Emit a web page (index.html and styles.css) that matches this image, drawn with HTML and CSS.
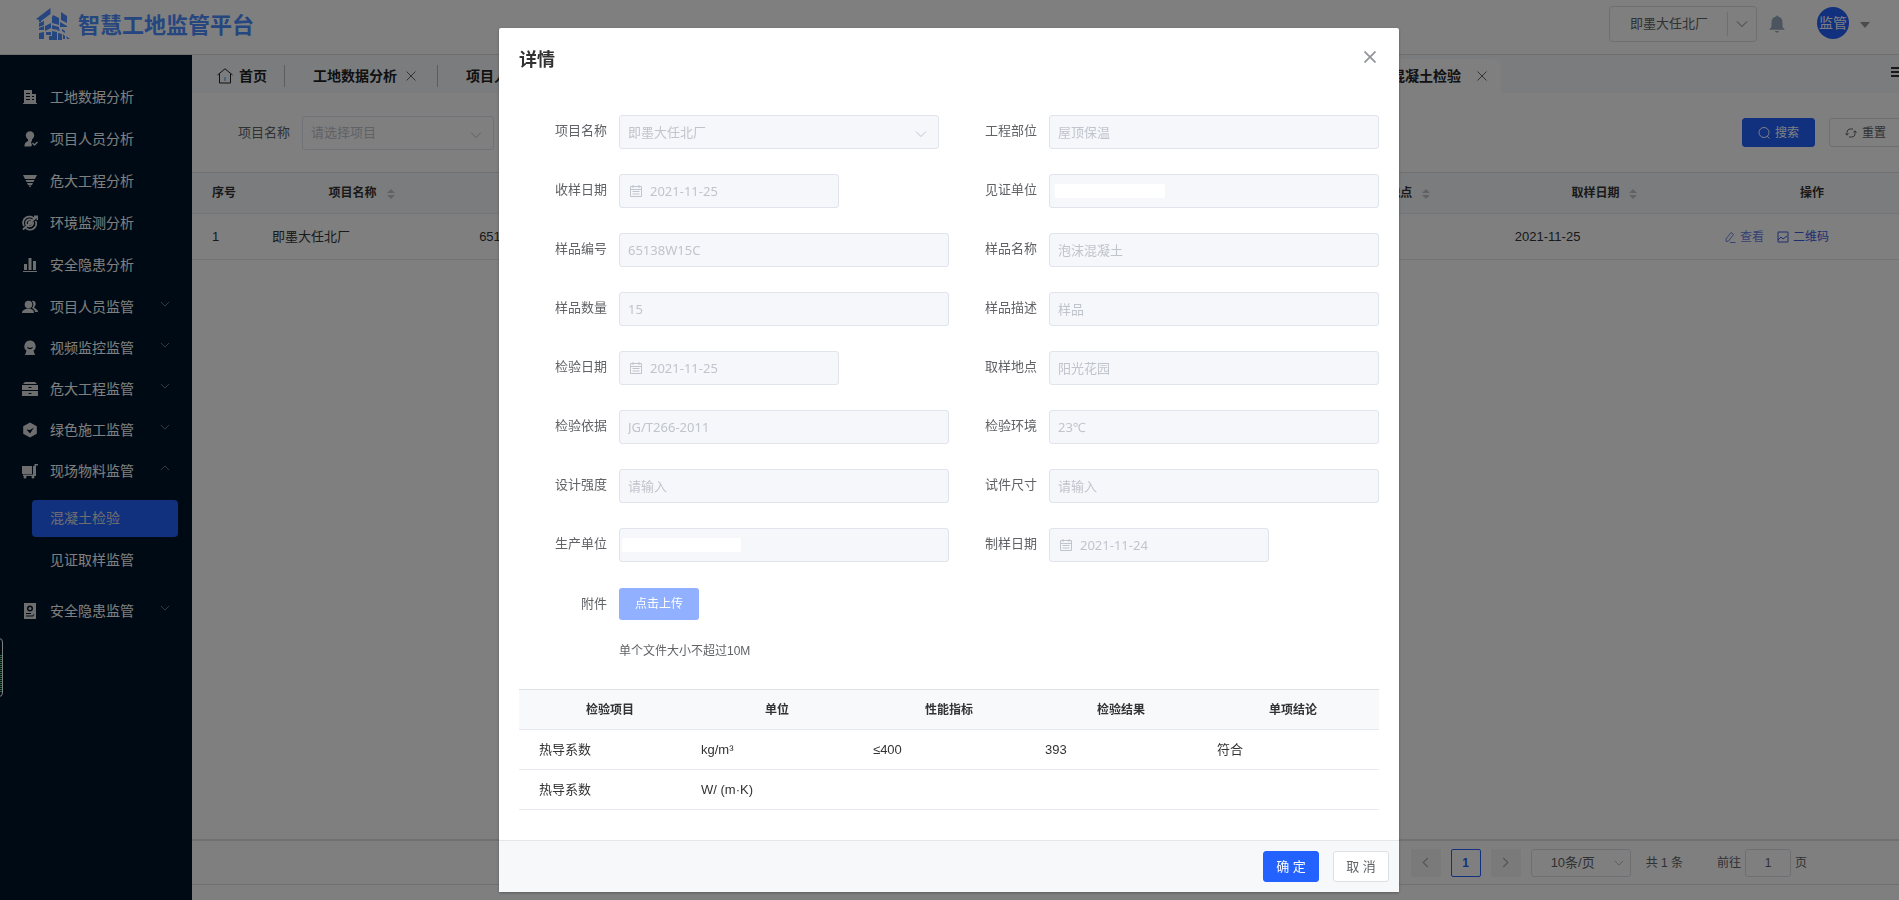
FILE: index.html
```html
<!DOCTYPE html>
<html lang="zh-CN">
<head>
<meta charset="utf-8">
<title>智慧工地监管平台</title>
<link rel="stylesheet" href="styles.css">
</head>
<body>
<svg class="sprite" aria-hidden="true">
  <symbol id="down" viewBox="0 0 12 12"><path d="M1 3.5l5 5 5-5" fill="none" stroke="currentColor"/></symbol>
  <symbol id="up" viewBox="0 0 12 12"><path d="M1 8.5l5-5 5 5" fill="none" stroke="currentColor"/></symbol>
  <symbol id="close" viewBox="0 0 12 12"><path d="M1.5 1.5l9 9M10.500 1.500l-9 9" fill="none" stroke="currentColor"/></symbol>
  <symbol id="calendar" viewBox="0 0 14 14"><path d="M1.500 2.500h11v10h-11zM1.500 5.500h11M4 1v3M10 1v3M3.500 7.500h7M3.500 10h7" fill="none" stroke="currentColor"/></symbol>
</svg>
<div class="app">
  <header class="topbar">
    <div class="brand">
      <svg class="brand-mark" viewBox="0 0 34 32" fill="currentColor"><path d="M0 11L14.500 0v6L5 13v1H3v-2zM17 7l6 3v7l-7-2V9zM25 4l6 4v7l-6-3zM3 15l5-2v4l-5 2zM9 18l6-3v5l-6 3zM16 17l7 2v3l-7-1zM24 14l7 4v1h-7zM3 20l5-2v4H3zM3 25l5-1v7H3zM10 24h5v3h-5zM16 23l5 1v8h-5zM13 28h3v4h-3zM22 20l2 2-1 1-2-1zM22 25l4 1v6h-4zM26 21l3 2v2l-3-2zM27 26l2 2v3h-2zM30 28l4 3h-3z"/></svg>
      <span class="brand-name">智慧工地监管平台</span>
    </div>
    <div class="top-tools">
      <button class="site-switch" type="button"><span>即墨大任北厂</span><svg class="i12"><use href="#down"/></svg></button>
      <button class="bare bell" type="button" aria-label="通知"><svg viewBox="0 0 16 18" fill="currentColor"><path d="M7 1.500a1 1 0 012 0C12 2 13.500 4.500 13.500 7.500V11c0 1.500.8 2 2 3v.8H.5V14c1.200-1 2-1.500 2-3V7.500C2.500 4.500 4 2 7 1.500zM6 16h4c-.5 2-3.500 2-4 0z"/></svg></button>
      <button class="bare user" type="button"><span class="avatar">监管</span><span class="caret"></span></button>
    </div>
  </header>
  <div class="shell">
    <nav class="side">
      <ul class="menu">
        <li><a class="entry" href="#"><svg viewBox="0 0 16 16" fill="currentColor"><path d="M2 1h8v4h4v9h1v1H1v-1h1zM4 4v1h4V4zM4 7v1h4V7zM4 10v1h4v-1zM10 7v1h2V7zM10 10v1h2v-1z" fill-rule="evenodd"/></svg>工地数据分析</a></li>
        <li><a class="entry" href="#"><svg viewBox="0 0 16 16" fill="currentColor"><circle cx="8" cy="4.500" r="4.200"/><path d="M6 8h4v2l-1 1 1 3-1 1.500H2.500C2.500 12 4 11 6 10zM10 12.500l1-1 1.500 1.500 2.500-2.500 1 1-3.500 3.500z"/></svg>项目人员分析</a></li>
        <li><a class="entry" href="#"><svg viewBox="0 0 16 16" fill="currentColor"><path d="M1 2h14l-2 4H3zM3.500 7h9l-1 2h-7zM5 10h6l-1 2H6zM6.500 12.500h3L8 14.500z"/></svg>危大工程分析</a></li>
        <li><a class="entry" href="#"><svg viewBox="0 0 16 16" fill="none" stroke="currentColor" stroke-width="1.800"><path d="M12.500 4.500A6 6 0 102 11M3.500 12.500A6 6 0 0013.500 6M10 5.500a3.500 3.500 0 00-5 5M6 11a3.500 3.500 0 005-4M1 14.500L15 1.500M12 1.500h3.500V5"/><circle cx="8" cy="8" r="1.300"/></svg>环境监测分析</a></li>
        <li><a class="entry" href="#"><svg viewBox="0 0 16 16" fill="currentColor"><path d="M2 7h3v6H2zM6.500 1h3v12h-3zM11 4h3v9h-3zM1 14h14v1H1z"/></svg>安全隐患分析</a></li>
      </ul>
      <ul class="menu menu-groups">
        <li><a class="entry" href="#"><svg viewBox="0 0 16 16" fill="currentColor"><circle cx="6.500" cy="5.500" r="3.800"/><path d="M0 14c0-3 3-3.500 5-4.500h3c2 1 4 1.500 4 4.500zM10 2c4-1 5 4 2 6.500 2 1.500 4 2 4 4.500h-3c0-2-1.500-3-3-4 2-2 1.500-5 0-7z"/></svg><span>项目人员监管</span><svg class="arrow"><use href="#down"/></svg></a></li>
        <li><a class="entry" href="#"><svg viewBox="0 0 16 16" fill="currentColor"><path d="M8 .5a5.800 5.800 0 013.500 10.300L13 15H3l1.500-4.200A5.800 5.800 0 018 .5zM5 7c1 3 5 3 6 0L8 8z" fill-rule="evenodd"/></svg><span>视频监控监管</span><svg class="arrow"><use href="#down"/></svg></a></li>
        <li><a class="entry" href="#"><svg viewBox="0 0 16 16" fill="currentColor"><path d="M3 1h10l2 2H1zM0 4h16v5H0zM0 10h16v5H0zM6.500 6v1h3V6zM6.500 12v1h3v-1z" fill-rule="evenodd"/></svg><span>危大工程监管</span><svg class="arrow"><use href="#down"/></svg></a></li>
        <li><a class="entry" href="#"><svg viewBox="0 0 16 16" fill="currentColor"><path d="M8 .5l6.800 3.800v7.400L8 15.500l-6.800-3.800V4.300zM4.500 7.500l3.500 4 4-6-4 2.500z" fill-rule="evenodd"/></svg><span>绿色施工监管</span><svg class="arrow"><use href="#down"/></svg></a></li>
        <li>
          <a class="entry" href="#"><svg viewBox="0 0 16 16" fill="currentColor"><path d="M0 3h10v8H0zM11 3h1.500V1H16v1.500h-2V13H1v-1.500h10z"/><circle cx="3" cy="14" r="1.500"/><circle cx="11" cy="14" r="1.500"/></svg><span>现场物料监管</span><svg class="arrow"><use href="#up"/></svg></a>
          <ul class="submenu">
            <li><a class="leaf leaf-active" href="#">混凝土检验</a></li>
            <li><a class="leaf" href="#">见证取样监管</a></li>
          </ul>
        </li>
        <li><a class="entry" href="#"><svg viewBox="0 0 16 16" fill="currentColor"><path d="M2 0h12v16H2zM8 2.500a3 3 0 100 6 3 3 0 000-6zM4 10v1h5v-1zM4 12.500v1h7l1.500-2.500-1 .2-1 1.300z" fill-rule="evenodd"/><circle cx="8" cy="5.500" r="1.500"/></svg><span>安全隐患监管</span><svg class="arrow"><use href="#down"/></svg></a></li>
      </ul>
      <span class="meter"></span>
    </nav>
    <main class="work">
      <div class="tabs">
        <a class="tab tab-home" href="#"><svg viewBox="0 0 16 16" fill="none" stroke="currentColor"><path d="M.5 7L8 .8 15.500 7M2.500 6v9h11V6"/><path class="door" d="M8 9v4"/></svg>首页</a>
        <a class="tab" href="#">工地数据分析<svg class="i12"><use href="#close"/></svg></a>
        <a class="tab" href="#">项目人</a>
        <a class="tab tab-active" href="#">混凝土检验<svg class="i12"><use href="#close"/></svg></a>
        <button class="bare tabs-more" type="button" aria-label="更多"></button>
      </div>
      <form class="filters">
        <label for="project">项目名称</label>
        <div class="picker filter-picker"><input id="project" type="text" placeholder="请选择项目"><svg class="i12"><use href="#down"/></svg></div>
        <div class="filter-actions">
          <button class="btn btn-primary" type="button"><svg class="i12" viewBox="0 0 12 12" fill="none" stroke="currentColor"><circle cx="6" cy="5.500" r="5"/><path d="M9 9l2.500 2.500"/></svg>搜索</button>
          <button class="btn" type="button"><svg class="i12" viewBox="0 0 12 12" fill="none" stroke="currentColor"><path d="M2 8V5.500C2 3 3.500 2 5.500 2H8M10 4v2.500C10 9 8.500 10 6.500 10H4M.5 6.500L2 8.200 3.700 6.500M8.300 5.500L10 3.800l1.500 1.700"/></svg>重置</button>
        </div>
      </form>
      <table class="grid">
        <colgroup><col class="c-index"><col><col><col><col><col><col><col><col class="c-action"></colgroup>
        <thead><tr><th class="first">序号</th><th>项目名称<span class="sort"></span></th><th></th><th></th><th></th><th></th><th>取样地点<span class="sort"></span></th><th>取样日期<span class="sort"></span></th><th>操作</th></tr></thead>
        <tbody><tr><td class="first">1</td><td>即墨大任北厂</td><td>65138W15C</td><td></td><td></td><td></td><td></td><td>2021-11-25</td>
          <td><div class="ops"><a href="#"><svg class="i12" viewBox="0 0 12 12" fill="none" stroke="currentColor"><path d="M2 8l5-6.500 2.500 2L4.500 10 2 10.500zM6 11.500h5.500"/></svg>查看</a><a class="strong" href="#"><svg class="i12" viewBox="0 0 12 12" fill="none" stroke="currentColor"><path d="M1 1h10v10H1zM1 9l3-3 2 2 4-3"/></svg>二维码</a></div></td></tr></tbody>
      </table>
      <footer class="pager">
        <button class="page" type="button" aria-label="上一页"><svg viewBox="0 0 12 12" fill="none" stroke="currentColor" stroke-width="1.500"><path d="M8.500 1L3.500 6l5 5"/></svg></button>
        <button class="page page-current" type="button">1</button>
        <button class="page" type="button" aria-label="下一页"><svg viewBox="0 0 12 12" fill="none" stroke="currentColor" stroke-width="1.500"><path d="M3.500 1l5 5-5 5"/></svg></button>
        <button class="page-size" type="button">10条/页<svg class="i12"><use href="#down"/></svg></button>
        <span class="total">共 1 条</span>
        <label class="jump">前往<input type="text" value="1">页</label>
      </footer>
    </main>
  </div>
</div>
<div class="mask">
  <section class="dialog" role="dialog" aria-labelledby="dlg-title">
    <header class="dialog-head"><h2 id="dlg-title">详情</h2><button class="bare dialog-close" type="button" aria-label="关闭"><svg viewBox="0 0 12 12" fill="none" stroke="currentColor" stroke-width="1.700"><path d="M.5 .5l11 11M11.500 .5l-11 11"/></svg></button></header>
    <div class="dialog-body">
      <form class="form">
        <div class="row"><label for="f1">项目名称</label><div class="picker wide"><input id="f1" type="text" value="即墨大任北厂" disabled><svg class="i12"><use href="#down"/></svg></div></div>
        <div class="row"><label for="f2">工程部位</label><input id="f2" type="text" value="屋顶保温" disabled></div>
        <div class="row"><label for="f3">收样日期</label><div class="picker date"><svg><use href="#calendar"/></svg><input id="f3" type="text" value="2021-11-25" disabled></div></div>
        <div class="row"><label for="f4">见证单位</label><div class="picker"><input id="f4" type="text" disabled><span class="redact redact-a"></span></div></div>
        <div class="row"><label for="f5">样品编号</label><input id="f5" type="text" value="65138W15C" disabled></div>
        <div class="row"><label for="f6">样品名称</label><input id="f6" type="text" value="泡沫混凝土" disabled></div>
        <div class="row"><label for="f7">样品数量</label><input id="f7" type="text" value="15" disabled></div>
        <div class="row"><label for="f8">样品描述</label><input id="f8" type="text" value="样品" disabled></div>
        <div class="row"><label for="f9">检验日期</label><div class="picker date"><svg><use href="#calendar"/></svg><input id="f9" type="text" value="2021-11-25" disabled></div></div>
        <div class="row"><label for="f10">取样地点</label><input id="f10" type="text" value="阳光花园" disabled></div>
        <div class="row"><label for="f11">检验依据</label><input id="f11" type="text" value="JG/T266-2011" disabled></div>
        <div class="row"><label for="f12">检验环境</label><input id="f12" type="text" value="23℃" disabled></div>
        <div class="row"><label for="f13">设计强度</label><input id="f13" type="text" placeholder="请输入" disabled></div>
        <div class="row"><label for="f14">试件尺寸</label><input id="f14" type="text" placeholder="请输入" disabled></div>
        <div class="row"><label for="f15">生产单位</label><div class="picker"><input id="f15" type="text" disabled><span class="redact redact-b"></span></div></div>
        <div class="row"><label for="f16">制样日期</label><div class="picker date"><svg><use href="#calendar"/></svg><input id="f16" type="text" value="2021-11-24" disabled></div></div>
        <div class="row row-upload"><label for="f17">附件</label><div><button id="f17" class="upload" type="button" disabled>点击上传</button><p class="tip">单个文件大小不超过10M</p></div></div>
      </form>
      <table class="grid results">
        <thead><tr><th class="first">检验项目</th><th>单位</th><th>性能指标</th><th>检验结果</th><th>单项结论</th></tr></thead>
        <tbody>
          <tr><td class="first">热导系数</td><td>kg/m³</td><td>≤400</td><td>393</td><td>符合</td></tr>
          <tr><td class="first">热导系数</td><td>W/ (m·K)</td><td></td><td></td><td></td></tr>
        </tbody>
      </table>
    </div>
    <footer class="dialog-foot"><button class="act act-primary" type="button">确 定</button><button class="act" type="button">取 消</button></footer>
  </section>
</div>
</body>
</html>
```
FILE: styles.css
```css
* { box-sizing: border-box; }
body {
  margin: 0;
  overflow: hidden;
  font: 13px/20px "Liberation Sans", "Noto Sans CJK SC", sans-serif;
  color: #333;
}
ul { margin: 0; padding: 0; list-style: none; }
a { color: inherit; text-decoration: none; }
button, input { font: inherit; color: inherit; margin: 0; }
.sprite { display: none; }
.i12 { width: 12px; height: 12px; flex: none; }
.bare { border: 0; padding: 0; background: none; }

.app { display: flex; flex-direction: column; height: 100vh; background: #fff; }

/* top bar */
.topbar {
  display: flex;
  justify-content: space-between;
  flex: none;
  height: 55px;
  padding: 6px 29px 0 36px;
  border-bottom: 1px solid #dcdcdc;
}
.brand { display: flex; align-items: center; gap: 8px; height: 36px; color: #4a8cff; }
.brand-mark { width: 34px; height: 32px; }
.brand-name { padding-top: 3px; font-size: 22px; font-weight: 700; }
.top-tools { display: flex; align-items: center; height: 36px; }
.site-switch {
  display: flex;
  align-items: center;
  justify-content: space-between;
  width: 148px;
  height: 36px;
  padding: 0 8px 0 20px;
  border: 1px solid #dcdfe6;
  border-radius: 4px;
  background: #fff;
  color: #606266;
}
.site-switch svg { box-sizing: content-box; padding: 6px 0 6px 8px; border-left: 1px solid #dcdfe6; color: #777; }
.bell { margin-left: 12px; width: 16px; height: 18px; color: #97a8be; }
.bell svg { display: block; }
.user { display: flex; align-items: center; gap: 11px; margin-left: 32px; padding-bottom: 2px; }
.avatar {
  width: 32px;
  height: 32px;
  border-radius: 50%;
  background: #2362ff;
  color: #fff;
  font-size: 14px;
  line-height: 32px;
  text-align: center;
  white-space: nowrap;
}
.caret { margin-top: 4px; border: 5px solid transparent; border-top: 6px solid #999; border-bottom: 0; }

/* side menu */
.shell { display: flex; flex: 1; min-height: 0; }
.side { position: relative; flex: none; width: 192px; padding-top: 21px; background: #001529; color: #fff; font-size: 14px; }
.entry { display: flex; align-items: center; gap: 12px; height: 42px; padding: 0 22px; }
.entry svg { width: 16px; height: 16px; color: #ddd; flex: none; }
.menu-groups .entry { height: 41px; }
.entry .arrow { width: 10px; height: 10px; margin: 0 0 6px auto; color: #888; }
.submenu { display: grid; gap: 5px; padding: 9px 14px 11px 32px; }
.leaf { display: block; height: 37px; padding-left: 18px; border-radius: 4px; line-height: 37px; }
.leaf-active { background: #2362ff; color: #ddd; }
.meter {
  position: absolute;
  left: -5px;
  top: 583px;
  width: 8px;
  height: 59px;
  border: 1px solid #fff;
  border-radius: 4px;
  background: repeating-linear-gradient(#4fd08a 0 1px, #001529 1px 2px) 0 16px / 100% 38px no-repeat;
}

/* workspace */
.work { display: flex; flex-direction: column; flex: none; width: calc(100% - 179px); }
.tabs { display: flex; align-items: center; height: 38px; padding: 4px 6px 0 0; background: #f7f9fc; color: #222; font-size: 14px; font-weight: 700; }
.tab { display: flex; align-items: center; height: 22px; padding: 0 20px 0 28px; }
.tab + .tab { border-left: 1px solid #bbb; }
.tab .i12 { margin-left: 8px; color: #666; }
.tab-home { gap: 6px; padding: 0 17px 0 25px; }
.tab-home svg { width: 16px; height: 16px; }
.door { stroke: #2a9df4; }
.tab.tab-active { height: 34px; margin-left: auto; padding: 0 13px 0 28px; border: 0; border-radius: 8px 8px 0 0; background: #fff; }
.tab-active .i12 { margin-left: 15px; }
.tabs-more { width: 15px; height: 10px; margin: -8px 0 0 390px; border: solid #333; border-width: 2px 0; background: linear-gradient(#333, #333) 0 2px / 100% 2px no-repeat; }
.filters { display: flex; align-items: center; height: 79px; padding: 0 10px 0 46px; }
.filters label { margin-right: 12px; color: #606266; }
.filter-actions { display: flex; gap: 14px; margin-left: auto; }
.btn {
  display: flex;
  align-items: center;
  justify-content: center;
  gap: 5px;
  width: 73px;
  height: 29px;
  border: 1px solid #dcdfe6;
  border-radius: 3px;
  background: #fff;
  color: #606266;
  font-size: 12px;
}
.btn-primary { border-color: #2362ff; background: #2362ff; color: #fff; }

/* data tables */
.grid { width: 100%; border-collapse: collapse; table-layout: fixed; border-top: 1px solid #dfe1e5; }
.grid th, .grid td { border-bottom: 1px solid #e6e9ef; padding: 0 10px; }
.grid th { height: 41px; background: #f7f9fb; font-size: 12px; }
.grid td { height: 46px; }
.grid .first { padding-left: 20px; }
.grid th.first { white-space: nowrap; }
.work th.first { text-align: left; }
.c-index { width: 70px; }
.c-action { width: 200px; }
.sort { display: inline-grid; gap: 2px; width: 24px; justify-items: center; vertical-align: middle; margin-left: 2px; }
.sort::before, .sort::after { content: ""; border: 4px solid transparent; }
.sort::before { border-top: 0; border-bottom-color: #c0c4cc; }
.sort::after { border-bottom: 0; border-top-color: #c0c4cc; }
.ops { display: flex; gap: 13px; padding-left: 2px; color: #6c86e8; font-size: 12px; }
.ops a { display: flex; align-items: center; gap: 4px; }
.ops .strong { color: #3a5ce0; }

/* pagination */
.pager {
  display: flex;
  align-items: center;
  justify-content: flex-end;
  height: 46px;
  margin: auto 0 15px;
  padding-right: 105px;
  border: solid #dfe1e5;
  border-width: 2px 0 1px;
  font-size: 12px;
  color: #606266;
}
.page { display: grid; place-items: center; flex: none; width: 30px; height: 28px; margin-right: 10px; padding: 0; border: 0; border-radius: 2px; background: #f4f4f5; color: #b0b0b0; }
.page svg { width: 11px; height: 11px; }
.page-current { border: 1px solid #2362ff; background: #fff; color: #2362ff; font-weight: 700; }
.page-size { display: flex; align-items: center; justify-content: space-between; flex: none; width: 100px; height: 28px; padding: 0 6px 0 19px; border: 1px solid #dcdfe6; border-radius: 3px; background: #fff; font-size: 13px; }
.page-size svg { color: #aaa; width: 10px; }
.total { margin: 0 34px 0 15px; white-space: nowrap; }
.jump { display: flex; align-items: center; gap: 4px; white-space: nowrap; }
.jump input { width: 46px; height: 28px; padding: 0; border: 1px solid #dcdfe6; border-radius: 3px; text-align: center; }

/* dialog */
.mask { position: fixed; inset: 0; display: flex; justify-content: center; align-items: flex-start; padding: 28px 1px 0 0; background: rgba(0, 0, 0, .5); }
.dialog { width: 900px; border-radius: 2px; background: #fff; box-shadow: 0 1px 3px rgba(0, 0, 0, .3); }
.dialog-head { display: flex; justify-content: space-between; padding: 20px 23px 0 20px; }
.dialog-head h2 { margin: 0; font-size: 18px; line-height: 24px; }
.dialog-close { display: block; height: 18px; color: #909399; }
.dialog-close svg { display: block; width: 12px; height: 12px; }
.dialog-body { padding: 43px 20px 30px; }
.form { display: grid; grid-template-columns: 1fr 1fr; row-gap: 25px; }
.row { display: grid; grid-template-columns: 88px 1fr; column-gap: 12px; }
.row > label { color: #606266; line-height: 32px; text-align: right; }
input { min-width: 0; }
.row input, .filter-picker input {
  width: 100%;
  height: 34px;
  padding: 0 8px 1px;
  border: 1px solid #dfe4ed;
  border-radius: 3px;
  font-family: "Noto Sans", "Noto Sans CJK SC", sans-serif;
}
.row input { background: #f5f7fa; color: #c0c4cc; }
.picker { position: relative; }
.picker svg { position: absolute; right: 12px; top: 13px; color: #c0c4cc; }
.filter-picker { width: 192px; }
.wide { width: 320px; }
.date { width: 220px; }
.picker.date svg { left: 10px; top: 10px; width: 14px; height: 14px; }
.row .date input { padding-left: 30px; }
::placeholder { color: #c0c4cc; opacity: 1; }
.redact { position: absolute; top: 10px; height: 14px; background: #fff; }
.redact-a { left: 6px; width: 110px; }
.redact-b { left: 3px; width: 119px; }
.row-upload { padding-top: 1px; }
.upload { display: block; width: 80px; height: 32px; padding: 0; border: 0; border-radius: 3px; background: #91b0ff; color: #fff; font-size: 12px; }
.tip { margin: 21px 0 28px; color: #606266; font-size: 12px; }
.results th, .results td { height: 40px; }
.dialog-foot { display: flex; justify-content: flex-end; gap: 14px; padding: 10px; border-top: 1px solid #e4e6ea; background: #f7f8fa; }
.act { width: 56px; height: 31px; padding: 0; border: 1px solid #dcdfe6; border-radius: 3px; background: #fff; color: #606266; }
.act-primary { border-color: #2362ff; background: #2362ff; color: #fff; }
```
